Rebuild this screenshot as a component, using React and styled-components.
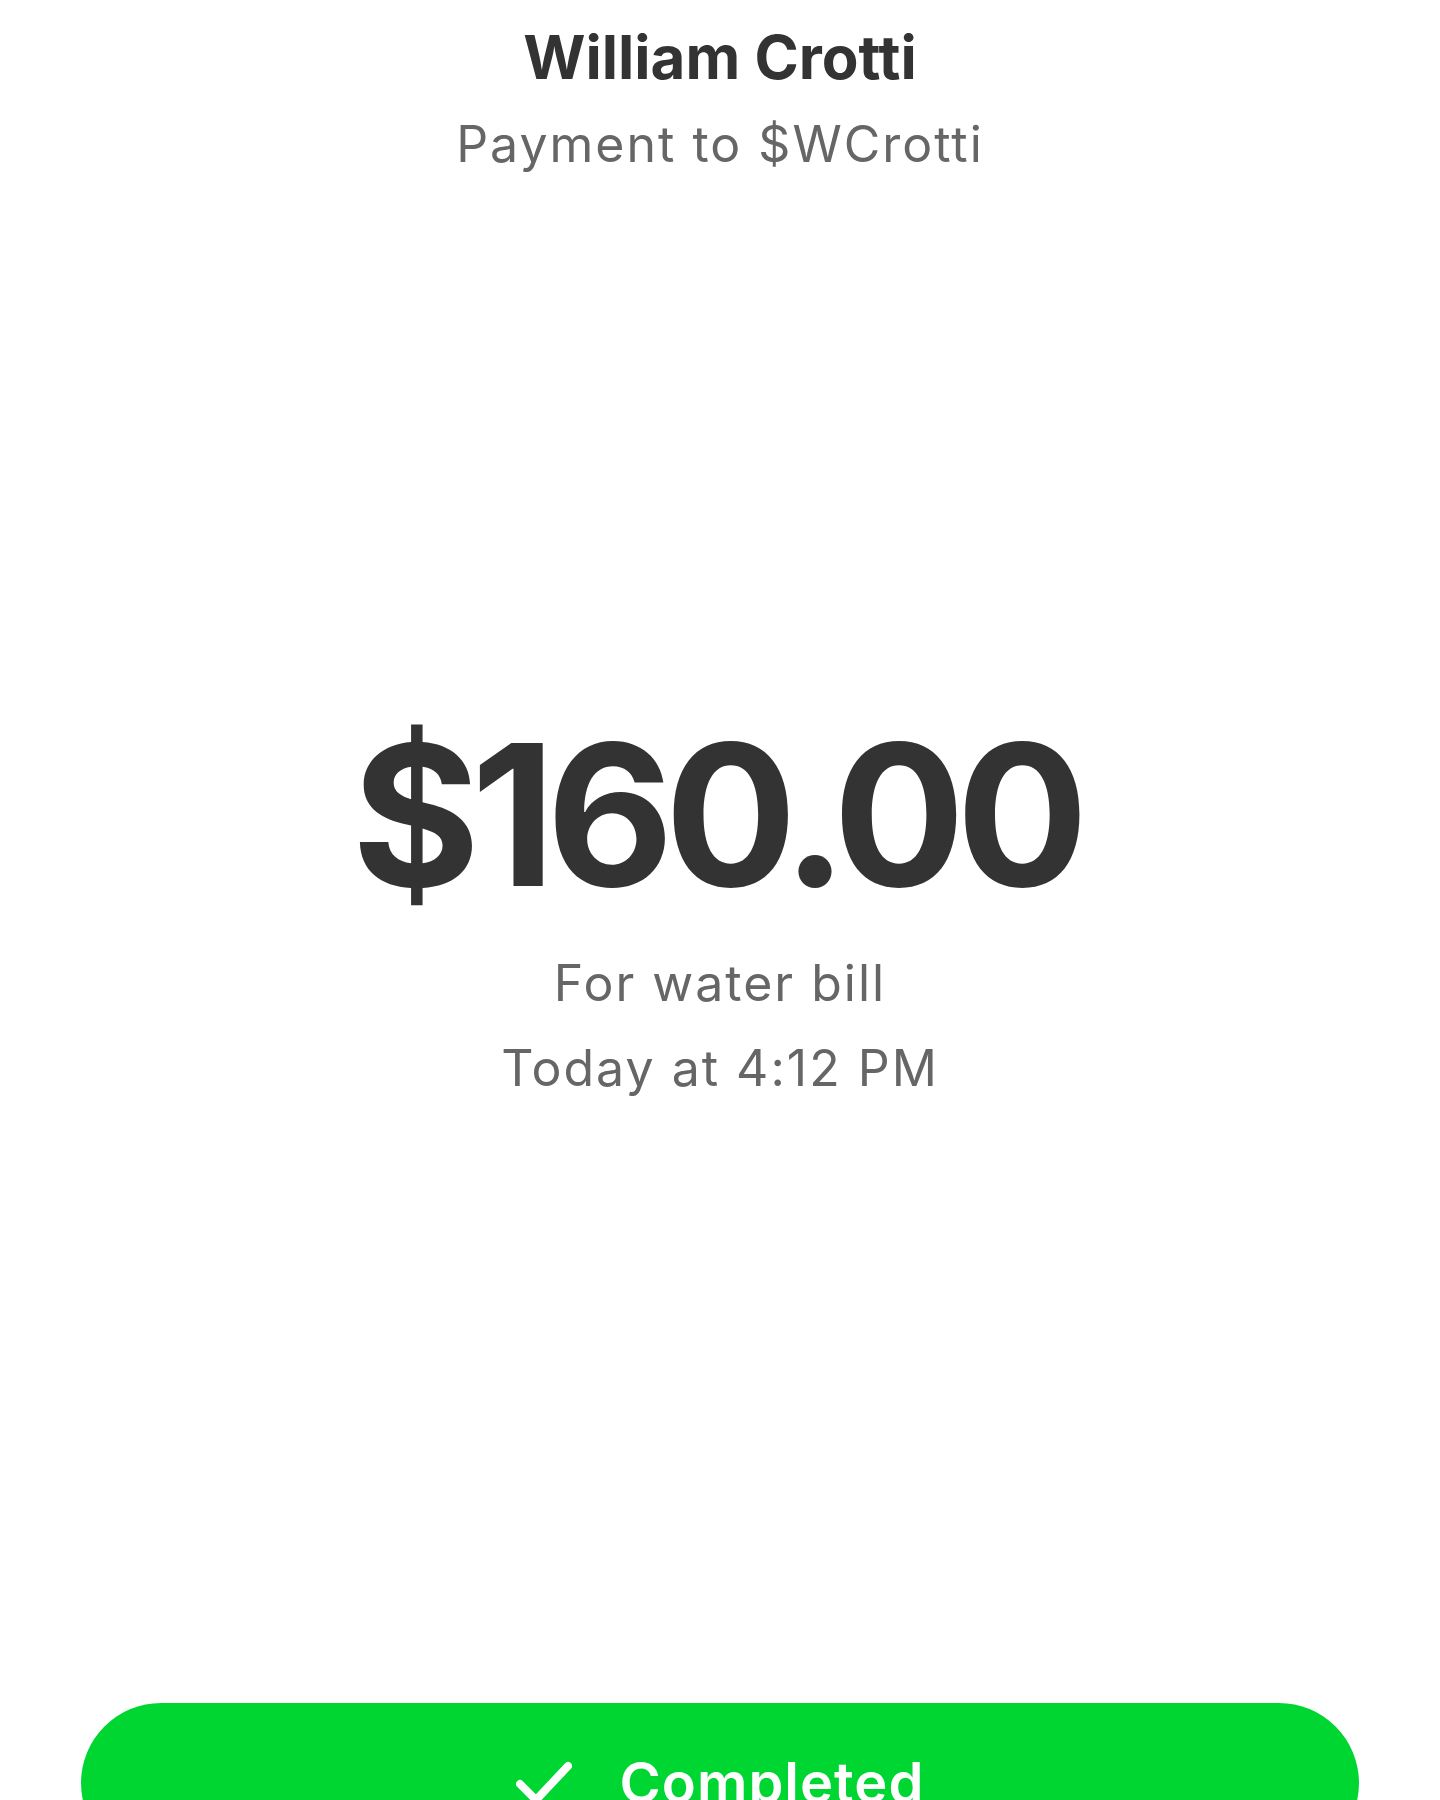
import React from 'react';
import styled, {createGlobalStyle} from "styled-components";

const GlobalStyle = createGlobalStyle`
    html, body {
        margin: 0;
        padding: 0;
        background: #ffffff;
    }
    body {
        font-family: Inter, "Noto Sans", sans-serif;
        font-variant-ligatures: none;
        font-feature-settings: "liga" 0, "calt" 0;
        overflow: hidden;
    }
`

const Screen = styled.div`
    width: 1440px;
    height: 1800px;
    overflow: hidden;
    display: flex;
    flex-direction: column;
    align-items: center;
    background: #ffffff;
`

const Header = styled.div`
    display: flex;
    flex-direction: column;
    align-items: center;
    padding-top: 27px;
    gap: 32px;
`

const Name = styled.div`
    font-weight: 700;
    font-size: 60px;
    line-height: 60px;
    color: #333333;
`

const SubText = styled.div`
    font-weight: 400;
    font-size: 50px;
    line-height: 50px;
    letter-spacing: 2px;
    color: #666666;
`

const AmountBlock = styled.div`
    display: flex;
    flex-direction: column;
    align-items: center;
    margin-top: 548px;
`

const Amount = styled.div`
    font-weight: 700;
    font-size: 196px;
    line-height: 196px;
    color: #333333;
    letter-spacing: -9px;
    padding-right: 9px;
    margin-bottom: 45px;
`

const Details = styled.div`
    display: flex;
    flex-direction: column;
    align-items: center;
    gap: 35px;
`

const CompletedButton = styled.div`
    margin-top: 610px;
    flex-shrink: 0;
    width: 1278px;
    height: 160px;
    border-radius: 80px;
    background: #00d632;
    display: flex;
    align-items: center;
    justify-content: center;
    gap: 48px;
    color: #ffffff;
    font-weight: 600;
    font-size: 56px;
    letter-spacing: 1px;
`

const Check = () => (
    <svg width="56" height="46" viewBox="0 0 56 46" fill="none">
        <path d="M4 24 L20 40 L52 6" stroke="#ffffff" strokeWidth="8" strokeLinecap="round" strokeLinejoin="round"/>
    </svg>
)

const App = () => {
    return (
        <>
            <GlobalStyle/>
            <Screen>
                <Header>
                    <Name>William Crotti</Name>
                    <SubText>Payment to $WCrotti</SubText>
                </Header>
                <AmountBlock>
                    <Amount>$160.00</Amount>
                    <Details>
                        <SubText>For water bill</SubText>
                        <SubText>Today at 4:12 PM</SubText>
                    </Details>
                </AmountBlock>
                <CompletedButton>
                    <Check/>
                    Completed
                </CompletedButton>
            </Screen>
        </>
    )
}

export default App
